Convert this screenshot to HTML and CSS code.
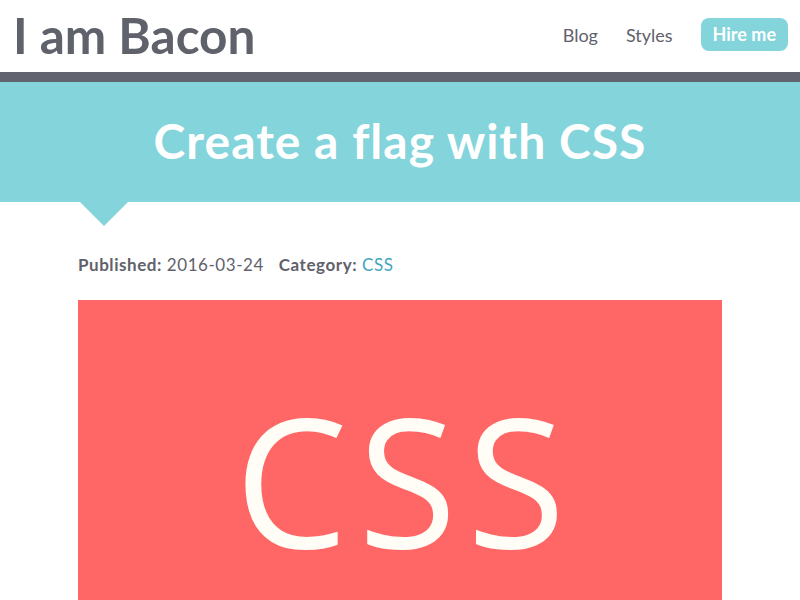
FILE: index.html
```html
<!DOCTYPE html>
<html>
<head>
<meta charset="utf-8">
<link rel="stylesheet" href="styles.css">
</head>
<body>
<header class="site-header">
  <a class="logo" href="#">I am Bacon</a>
  <nav class="nav">
    <a class="nav-link" href="#">Blog</a>
    <a class="nav-link" href="#">Styles</a>
    <a class="nav-btn" href="#">Hire me</a>
  </nav>
</header>
<div class="rule"></div>
<section class="banner">
  <h1 class="title">Create a flag with CSS</h1>
  <span class="pointer"></span>
</section>
<main class="content">
  <p class="meta"><b>Published:</b> 2016-03-24 <b class="cat">Category:</b> <a class="cat-link" href="#">CSS</a></p>
  <div class="flag"><span class="flag-text">CSS</span></div>
</main>
</body>
</html>
```

FILE: styles.css
```css
* { box-sizing: border-box; }
html, body { margin: 0; padding: 0; background: #fff; }
body {
  font-family: "Lato", "Open Sans", sans-serif;
  color: #5f616b;
  overflow: hidden;
  height: 600px;
}
a { text-decoration: none; }
.site-header {
  height: 72px;
  display: flex;
  align-items: center;
  justify-content: space-between;
  padding: 0 12px 0 13px;
}
.logo {
  font-size: 49.5px;
  font-weight: 700;
  color: #5f616b;
  line-height: 1;
  margin-top: -1px;
}
.nav {
  display: flex;
  align-items: center;
  margin-top: -3px;
}
.nav-link {
  font-size: 18px;
  color: #5f616b;
  margin-right: 28px;
}
.nav-btn {
  background: #84d4dc;
  color: #fff;
  font-size: 18px;
  font-weight: 700;
  padding: 5px 12px 6px;
  border-radius: 8px;
}
.rule { height: 10px; background: #61646e; }
.banner {
  position: relative;
  background: #84d4dc;
  height: 120px;
  display: flex;
  align-items: center;
  justify-content: center;
}
.title {
  margin: 0;
  color: #fff;
  font-size: 48px;
  font-weight: 700;
  letter-spacing: 1px;
  margin-top: -4px;
}
.pointer {
  position: absolute;
  left: 80px;
  top: 120px;
  width: 0;
  height: 0;
  border-left: 24px solid transparent;
  border-right: 24px solid transparent;
  border-top: 24px solid #84d4dc;
}
.content {
  width: 644px;
  margin: 0 auto;
  padding-top: 52px;
}
.meta {
  margin: 0 0 25px;
  font-size: 17px;
  letter-spacing: 0.55px;
}
.meta b { font-weight: 700; }
.cat { margin-left: 10px; }
.cat-link { color: #3fa5c0; }
.flag {
  background: #ff6666;
  height: 320px;
  display: flex;
  justify-content: center;
  padding-top: 62px;
  padding-left: 10px;
}
.flag-text {
  font-family: "Open Sans", sans-serif;
  font-size: 180px;
  color: #fffdf5;
  line-height: 1.3;
  letter-spacing: 10px;
}
```
